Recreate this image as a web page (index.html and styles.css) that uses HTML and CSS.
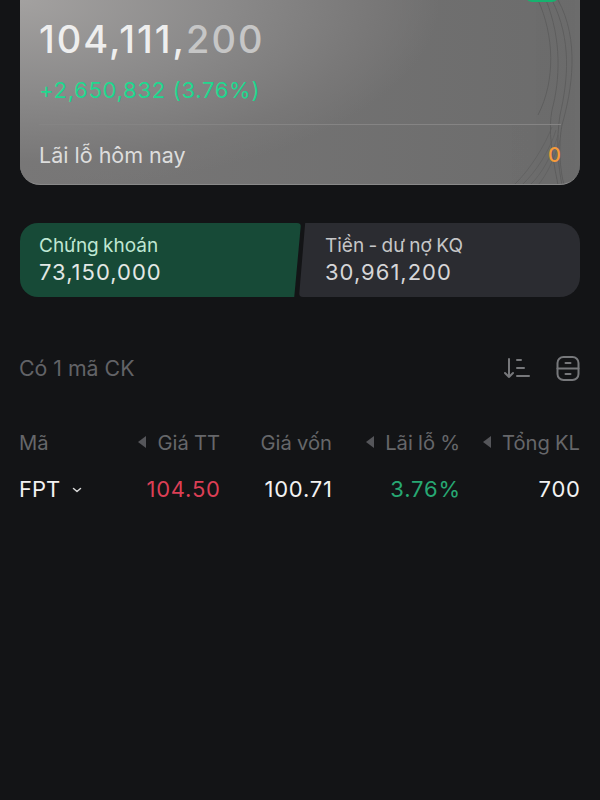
FILE: index.html
```html
<!DOCTYPE html>
<html lang="vi">
<head>
<meta charset="utf-8">
<title>Tài sản</title>
<link rel="stylesheet" href="styles.css">
</head>
<body>
<main class="page">
  <section class="card">
    <svg class="card-lines" width="560" height="205" viewBox="0 0 560 205" fill="none">
      <g stroke="#555555" stroke-width="1" opacity=".6">
        <path d="M518 20C534 55 536 100 518 135"/>
        <path d="M526 20C542 60 540 100 532 130C528 150 532 175 538 205"/>
        <path d="M532 20C552 60 548 100 540 135C536 160 538 185 542 205"/>
        <path d="M538 20C560 60 552 110 542 145C538 165 540 190 544 205"/>
      </g>
      <g stroke="#5c5c5c" stroke-width="1" opacity=".6">
        <path d="M494 205C510 190 525 165 532 147"/>
        <path d="M502 205C516 192 530 170 536 150"/>
        <path d="M510 205C522 194 532 175 538 155"/>
        <path d="M518 205C526 196 534 180 540 160"/>
      </g>
    </svg>
    <span class="badge"></span>
    <div class="total">
      <div class="total-value">104,111,<span class="fade">200</span></div>
      <div class="total-change">+2,650,832 (3.76%)</div>
    </div>
    <div class="today">
      <span class="today-label">Lãi lỗ hôm nay</span>
      <span class="today-value">0</span>
    </div>
  </section>

  <section class="split">
    <div class="tab tab-stock">
      <div class="tab-label">Chứng khoán</div>
      <div class="tab-value">73,150,000</div>
    </div>
    <div class="tab tab-cash">
      <div class="tab-label">Tiền - dư nợ KQ</div>
      <div class="tab-value">30,961,200</div>
    </div>
  </section>

  <section class="toolbar">
    <span class="count">Có 1 mã CK</span>
    <div class="tools">
      <svg width="28" height="24" viewBox="0 0 28 24" fill="none" stroke="#77787b" stroke-width="2" stroke-linecap="round" stroke-linejoin="round">
        <path d="M6 3V21M2 17L6 21L10 17"/>
        <path d="M14 4H18M14 12H21M14 20H26"/>
      </svg>
      <svg width="24" height="26" viewBox="0 0 24 26" fill="none" stroke="#77787b" stroke-width="2" stroke-linecap="round">
        <rect x="1.500" y="2" width="21" height="23" rx="6"/>
        <path d="M1.500 13.500H22.500M9.500 8H14.500M9.500 19H14.500"/>
      </svg>
    </div>
  </section>

  <section class="table">
    <div class="row head">
      <span class="cell c1">Mã</span>
      <span class="cell c2"><i class="arrow"></i>Giá TT</span>
      <span class="cell c3">Giá vốn</span>
      <span class="cell c4"><i class="arrow"></i>Lãi lỗ %</span>
      <span class="cell c5"><i class="arrow"></i>Tổng KL</span>
    </div>
    <div class="row body-row">
      <span class="cell c1 ticker">FPT
        <svg class="chev" width="10" height="6" viewBox="0 0 10 6" fill="none" stroke="#d8d8d8" stroke-width="1.500" stroke-linecap="round" stroke-linejoin="round"><path d="M1.500 1.500L5 4.500L8.500 1.500"/></svg>
      </span>
      <span class="cell c2 red">104.50</span>
      <span class="cell c3">100.71</span>
      <span class="cell c4 green">3.76%</span>
      <span class="cell c5">700</span>
    </div>
  </section>
</main>
</body>
</html>
```

FILE: styles.css
```css
* {
  box-sizing: border-box;
}

html,
body {
  margin: 0;
  height: 100%;
  overflow: hidden;
  background: #131416;
}

body {
  font-family: Inter, "Liberation Sans", sans-serif;
}

.page {
  display: flex;
  flex-direction: column;
  padding: 0 20px;
}

.card {
  position: relative;
  overflow: hidden;
  height: 205px;
  margin-top: -20px;
  padding: 41px 19px 0;
  border-radius: 20px;
  display: flex;
  flex-direction: column;
  background:
    radial-gradient(ellipse 420px 190px at 0 20px, #a3a1a0 0%, #8a8989 50%, #787777 85%, rgba(120, 119, 119, 0) 100%),
    linear-gradient(90deg, #787777 0%, #6c6c6c 100%);
  border-bottom: 1px solid #8a8a8a;
}

.card-lines {
  position: absolute;
  top: 0;
  left: 0;
}

.badge {
  position: absolute;
  top: 0;
  right: 22px;
  width: 32px;
  height: 22px;
  border-radius: 6px;
  background: #17b26f;
}

.total {
  position: relative;
  height: 104px;
}

.total-value {
  font-size: 38px;
  line-height: 36px;
  font-weight: 500;
  letter-spacing: 2px;
  color: #eeeeee;
}

.fade {
  color: #c6c6c6;
}

.total-change {
  margin-top: 20px;
  font-size: 22px;
  line-height: 26px;
  font-weight: 400;
  letter-spacing: 0.700px;
  color: #1fd88f;
}

.today {
  position: relative;
  display: flex;
  justify-content: space-between;
  align-items: center;
  height: 60px;
  border-top: 1px solid #858484;
}

.today-label {
  font-size: 21.500px;
  color: #dddddd;
}

.today-value {
  font-size: 20px;
  font-weight: 500;
  color: #f59b3a;
}

.split {
  position: relative;
  display: flex;
  margin-top: 38px;
  height: 74px;
  gap: 5px;
}

.tab {
  padding: 12px 19px 0;
  height: 74px;
}

.tab-stock {
  width: 281px;
  background: #174a37;
  border-radius: 18px 4px 4px 18px;
  clip-path: polygon(0 0, 100% 0, 97.600% 100%, 0 100%);
  color: #bfe7d3;
}

.tab-cash {
  flex: 1;
  margin-left: -7px;
  padding-left: 26px;
  background: #2b2c31;
  border-radius: 4px 20px 20px 4px;
  clip-path: polygon(2.200% 0, 100% 0, 100% 100%, 0 100%);
  color: #c6c6c8;
}

.tab-label {
  font-size: 19px;
  line-height: 22px;
  word-spacing: -1px;
}

.tab-value {
  margin-top: 2px;
  font-size: 22px;
  line-height: 26px;
  letter-spacing: 1px;
  color: #e3e8e5;
}

.tab-cash .tab-value {
  color: #d6d6d8;
}

.toolbar {
  display: flex;
  justify-content: space-between;
  align-items: center;
  margin-top: 56px;
  height: 30px;
}

.count {
  font-size: 21.300px;
  margin-left: -1px;
  color: #626367;
}

.tools {
  display: flex;
  align-items: center;
  gap: 25px;
}

.table {
  margin-top: 44px;
}

.row {
  display: grid;
  grid-template-columns: 100px 100px 112px 128px 120px;
  align-items: center;
}

.head {
  height: 30px;
  font-size: 20.200px;
  word-spacing: -0.500px;
  color: #66676a;
}

.body-row {
  margin-top: 17px;
  height: 30px;
  font-size: 22px;
  letter-spacing: 0.800px;
  color: #f2f2f2;
}

.body-row .cell {
  margin-right: -0.800px;
}

.cell {
  display: flex;
  align-items: center;
  justify-content: flex-end;
  white-space: nowrap;
}

.c1 {
  justify-content: flex-start;
  margin-left: -1px;
}

.ticker {
  letter-spacing: 0;
}

.arrow {
  width: 0;
  height: 0;
  margin-right: 11px;
  border-top: 6px solid transparent;
  border-bottom: 6px solid transparent;
  border-right: 8px solid #55565a;
}

.chev {
  margin-left: 12px;
  margin-top: 2px;
}

.red {
  color: #dc3f55;
}

.green {
  color: #27a873;
}
```
